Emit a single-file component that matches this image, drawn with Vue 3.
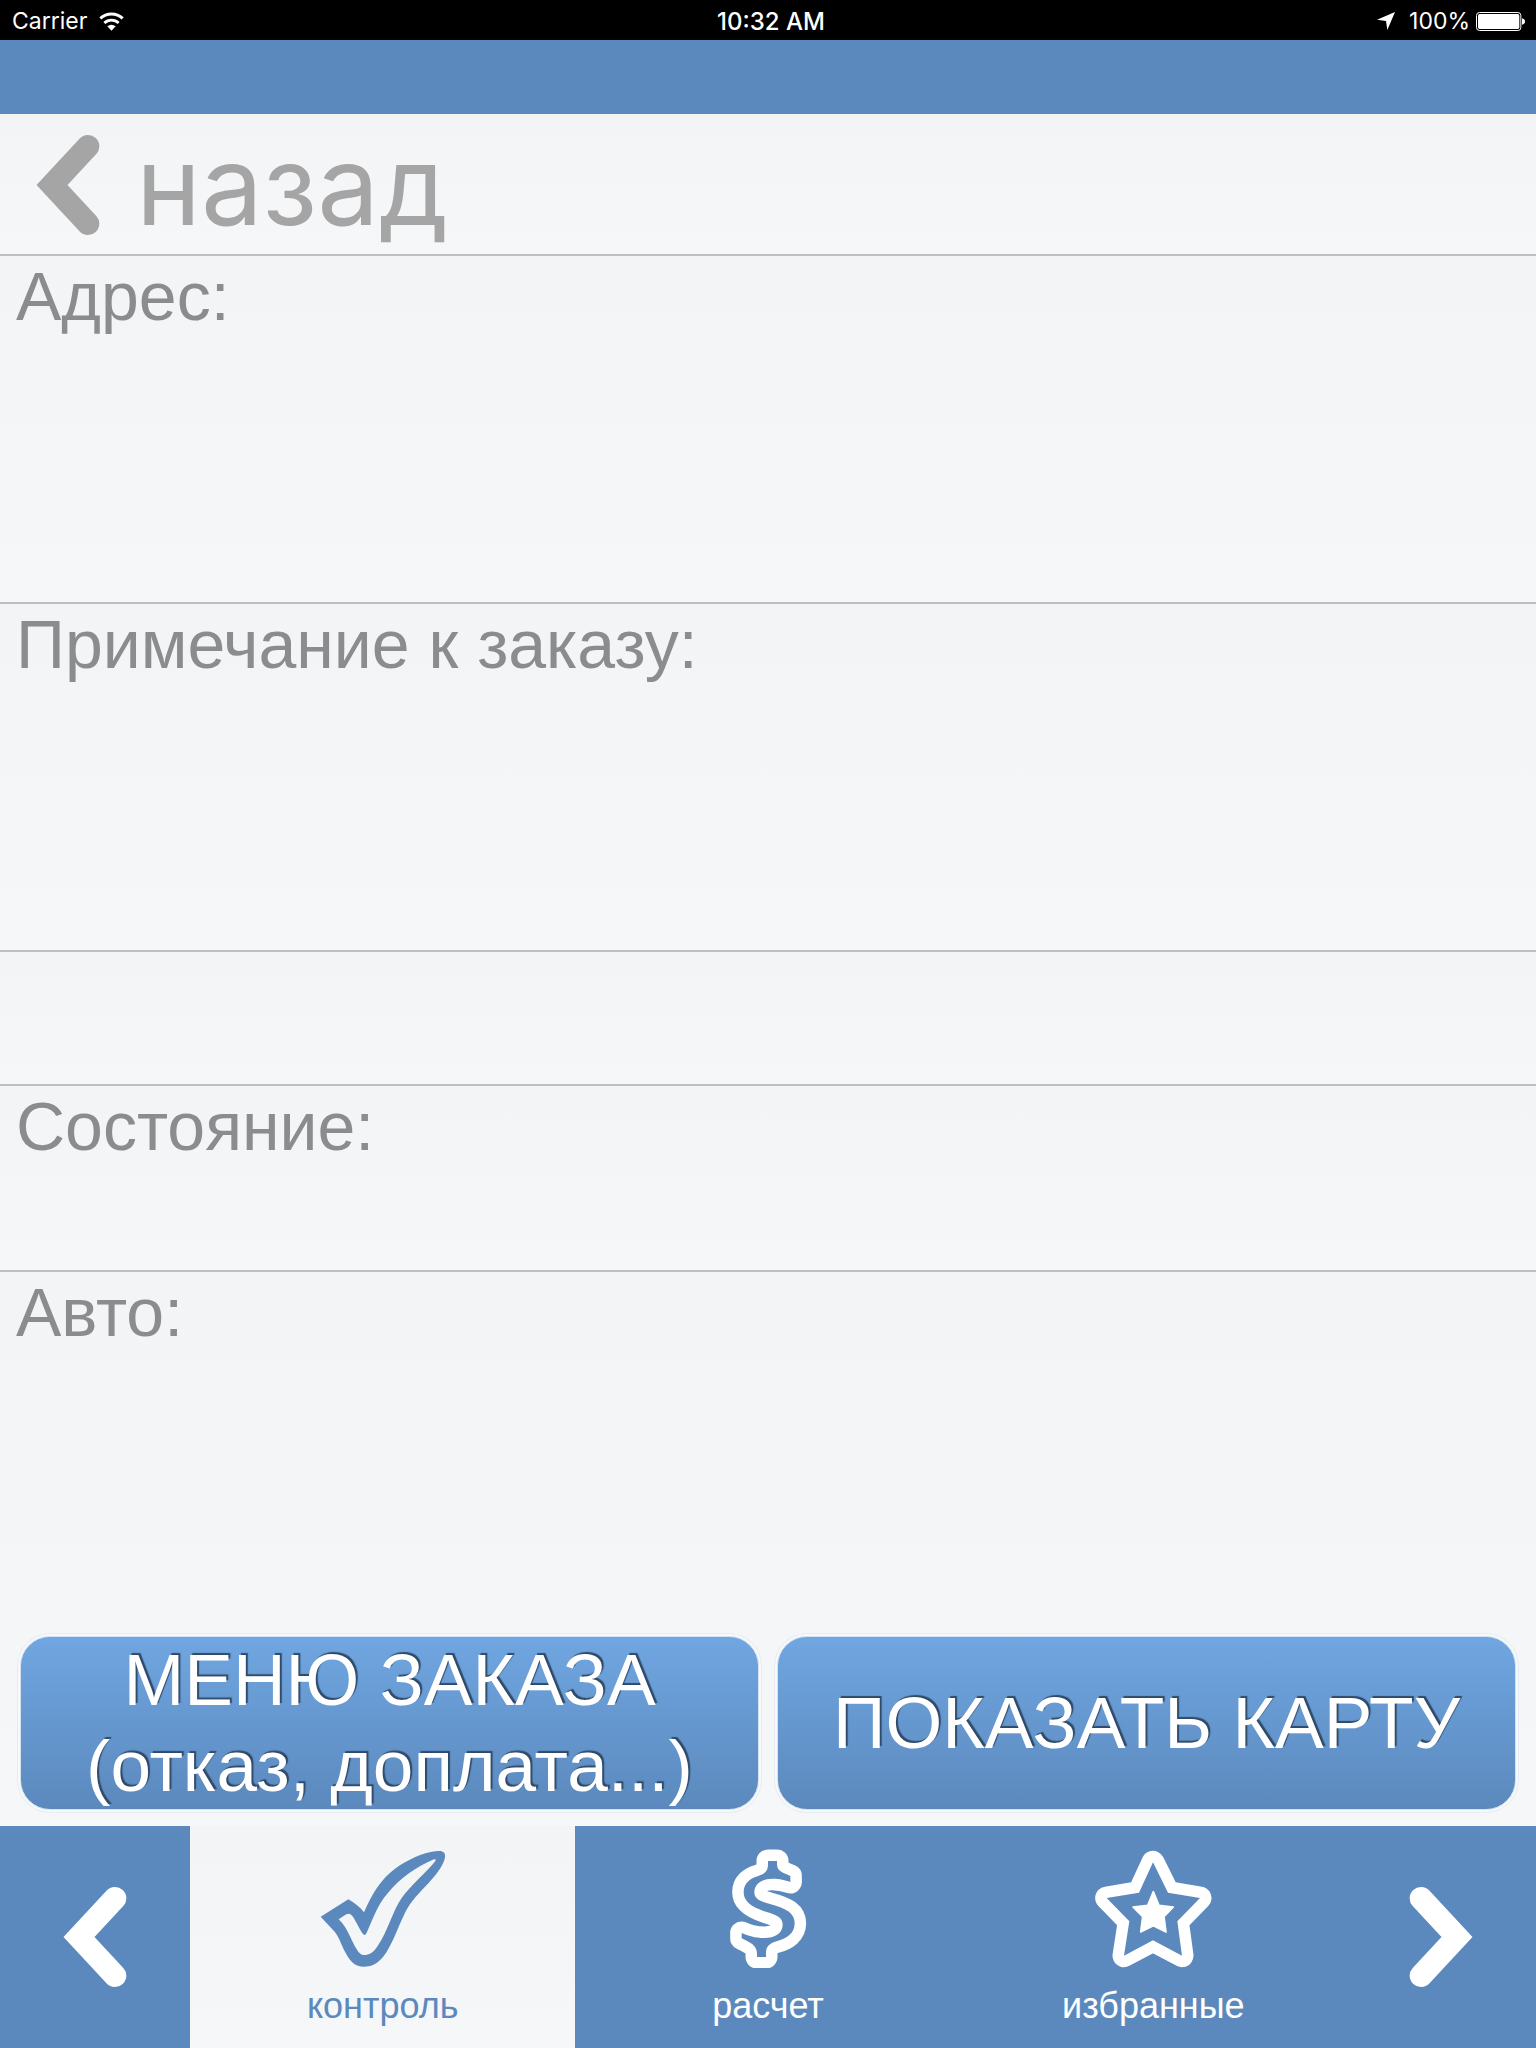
<template>
  <div class="screen">
    <div class="status-bar">
      <div class="status-side">
        <span>Carrier</span>
        <svg class="wifi" viewBox="0 0 75 57" aria-hidden="true">
          <path d="M4 19 A49 49 0 0 1 71 19" fill="none" stroke="#fff" stroke-width="9" />
          <path d="M16 33 A31 31 0 0 1 59 33" fill="none" stroke="#fff" stroke-width="8" />
          <path d="M25 43 Q37.500 34 50 43 L37.500 56 Z" fill="#fff" />
        </svg>
      </div>
      <span class="time">10:32 AM</span>
      <div class="status-side right">
        <svg class="location" viewBox="0 0 54 54" aria-hidden="true">
          <path d="M54 0 L31 54 L27 27 L0 23 Z" fill="#fff" />
        </svg>
        <span>100%</span>
        <svg class="battery" viewBox="0 0 150 57" aria-hidden="true">
          <rect x="1.500" y="1.500" width="133" height="54" rx="9" fill="none" stroke="#fff" stroke-width="3" />
          <rect x="6" y="6" width="124" height="45" rx="5" fill="#fff" />
          <path d="M138 19 Q147 21 147 28.500 Q147 36 138 38 Z" fill="#fff" />
        </svg>
      </div>
    </div>

    <div class="top-strip"></div>

    <header class="row back-row">
      <button type="button" class="back-btn">
        <svg class="chevron" viewBox="108 402 192 306" aria-hidden="true">
          <path d="M264 439 L156 555 L264 671" />
        </svg>
        <span>назад</span>
      </button>
    </header>

    <section
      v-for="field in fields"
      :key="field.key"
      class="row field"
      :class="field.key"
    >
      <h2 v-if="field.label" class="field-label">{{ field.label }}</h2>
    </section>

    <section class="row field auto">
      <h2 class="field-label">Авто:</h2>
      <div class="actions">
        <button type="button" class="action-btn">МЕНЮ ЗАКАЗА<br />(отказ, доплата...)</button>
        <button type="button" class="action-btn">ПОКАЗАТЬ КАРТУ</button>
      </div>
    </section>

    <nav class="tab-bar">
      <button type="button" class="tab-arrow" aria-label="Предыдущие">
        <svg class="chevron" viewBox="108 402 192 306" aria-hidden="true">
          <path d="M264 439 L156 555 L264 671" />
        </svg>
      </button>

      <button
        v-for="tab in tabs"
        :key="tab.key"
        type="button"
        class="tab"
        :class="{ active: activeTab === tab.key }"
        @click="activeTab = tab.key"
      >
        <svg v-if="tab.key === 'control'" class="tab-icon" viewBox="60 54 378 360" aria-hidden="true">
          <path
            fill="currentColor"
            fill-rule="evenodd"
            d="M62 260 L145 208 C165 219 182 233 192 247 C215 192 245 145 285 116 C320 91 370 66 412 63 C430 61 437 68 435 82 C432 103 412 130 393 151 C345 204 333 212 311 257 C292 295 277 345 249 381 C230 404 211 410 192 410 C165 410 152 396 137 369 C122 341 118 322 104 305 Z
            M116 268 L139 253 Q149 247 157 258 C170 276 180 302 190 313 Q195 318 200 308 C217 272 230 228 263 190 C300 144 350 110 402 88 Q410 86 406 93 C384 123 329 169 305 204 C276 247 262 307 233 348 C219 370 207 375 192 375 Q180 375 172 361 C151 329 143 292 116 268 Z"
          />
        </svg>
        <svg v-else-if="tab.key === 'payment'" class="tab-icon" viewBox="54 54 240 360" aria-hidden="true">
          <path class="outlined" :d="dollarPath" />
          <path class="cutout" :d="dollarPath" />
        </svg>
        <svg v-else class="tab-icon" viewBox="42 54 354 360" aria-hidden="true">
          <path class="outlined" :d="starPath" />
          <path class="cutout" :d="starPath" />
          <path
            fill="currentColor"
            stroke="currentColor"
            stroke-width="5"
            stroke-linejoin="round"
            d="M220 185 L237 226 L280 231 L252 260 L258 306 L220 287 L182 306 L188 260 L159 231 L203 226 Z"
          />
        </svg>
        <span>{{ tab.label }}</span>
      </button>

      <button type="button" class="tab-arrow next" aria-label="Следующие">
        <svg class="chevron" viewBox="108 402 192 306" aria-hidden="true">
          <path d="M144 439 L252 555 L144 671" />
        </svg>
      </button>
    </nav>
  </div>
</template>

<script setup>
import { ref } from 'vue'

const fields = [
  { key: 'address', label: 'Адрес:' },
  { key: 'note', label: 'Примечание к заказу:' },
  { key: 'blank', label: '' },
  { key: 'state', label: 'Состояние:' },
]

const tabs = [
  { key: 'control', label: 'контроль' },
  { key: 'payment', label: 'расчет' },
  { key: 'favorites', label: 'избранные' },
]

const activeTab = ref('control')

const starPath =
  'M219 97 L264 188 L360 204 L292 274 L306 377 L219 331 L132 377 L148 274 L80 204 L177 188 Z'

const dollarPath =
  'M174 93 H201 V103 C201 125 220 128 241 138 V156 C225 150 210 146 187 146 ' +
  'C155 146 133 162 133 187 C133 207 150 214 180 222 C230 235 254 250 254 280 ' +
  'C254 310 230 326 200 334 C178 340 168 350 168 370 V381 H141 V372 ' +
  'C141 345 120 338 95 325 V309 C115 318 135 324 163 324 C195 324 218 309 218 284 ' +
  'C218 262 200 255 170 246 C125 232 101 215 101 187 C101 160 120 145 145 138 ' +
  'C165 132 174 122 174 103 Z'
</script>

<style>
body { margin: 0; }
</style>

<style scoped>
.screen {
  --blue: #5b89bd;
  --line: #bdbec1;
  display: flex;
  flex-direction: column;
  min-height: 100vh;
  background: #f5f6f8;
  font-family: "Liberation Sans", Arial, sans-serif;
}

button {
  margin: 0;
  padding: 0;
  border: none;
  background: none;
  color: inherit;
  font: inherit;
  cursor: pointer;
}

.status-bar {
  box-sizing: border-box;
  display: grid;
  grid-template-columns: 1fr auto 1fr;
  align-items: center;
  height: 40px;
  padding: 2px 10px 0 12px;
  background: #000;
  color: #fff;
  font-family: Inter, Roboto, sans-serif;
  font-size: 23px;
}

.status-side { display: flex; align-items: center; gap: 12px; }
.status-side.right { justify-content: flex-end; gap: 6px; }
.time { padding-left: 4px; font-size: 24px; font-weight: 500; }
.wifi { width: 25px; height: 19px; }
.location { width: 18px; height: 18px; margin-right: 8px; }
.battery { width: 50px; height: 19px; }

.top-strip { height: 74px; background: var(--blue); }

.row {
  box-sizing: border-box;
  border-bottom: 2px solid var(--line);
  background: linear-gradient(#f3f4f6, #f6f7f9);
}

.back-row { height: 142px; }

.back-btn {
  display: flex;
  align-items: center;
  gap: 36px;
  height: 142px;
  padding-left: 36px;
  color: #a5a5a5;
  font-family: Inter, Roboto, sans-serif;
  font-size: 110px;
  line-height: 142px;
}

.chevron { width: 64px; height: 102px; flex: none; }

.chevron path {
  fill: none;
  stroke: currentColor;
  stroke-width: 68;
  stroke-linecap: round;
  stroke-linejoin: miter;
}

.field { padding: 0 16px; }
.address,
.note { min-height: 348px; }
.blank { min-height: 134px; }
.state { min-height: 186px; }

.auto {
  display: flex;
  flex: 1;
  flex-direction: column;
  border-bottom: none;
  padding-bottom: 16px;
}

.field-label {
  margin: 0;
  color: #8b8c8e;
  font-size: 68px;
  font-weight: 400;
  line-height: 80px;
}

.actions {
  display: grid;
  grid-template-columns: 1fr 1fr;
  gap: 18px;
  margin-top: auto;
  padding: 0 4px;
}

.action-btn {
  min-height: 174px;
  border: 1px solid #d5e1ef;
  border-radius: 30px;
  background: linear-gradient(#70a6e1, #5b89bd);
  box-shadow: 0 0 0 2px #f8f9fb, 0 0 0 3px #e6ecf3;
  color: #fff;
  font-size: 73px;
  line-height: 86px;
  text-shadow: 2px -2px 1px #2f4a68;
  white-space: nowrap;
}

.tab-bar {
  display: grid;
  grid-template-columns: 190px 1fr 1fr 1fr 190px;
  height: 222px;
  background: var(--blue);
  color: #fff;
}

.tab-arrow { display: flex; align-items: center; justify-content: center; }

.tab {
  display: flex;
  flex-direction: column;
  align-items: center;
  gap: 16px;
  padding-top: 22px;
  font-size: 36px;
  line-height: 44px;
}

.tab.active {
  background: linear-gradient(#f3f4f6, #f6f7f9);
  color: var(--blue);
}

.tab-icon { height: 120px; flex: none; }

.outlined {
  fill: currentColor;
  stroke: currentColor;
  stroke-width: 69;
  stroke-linejoin: round;
}

.cutout { fill: var(--blue); }
.tab.active .cutout { fill: #f4f5f8; }
</style>
